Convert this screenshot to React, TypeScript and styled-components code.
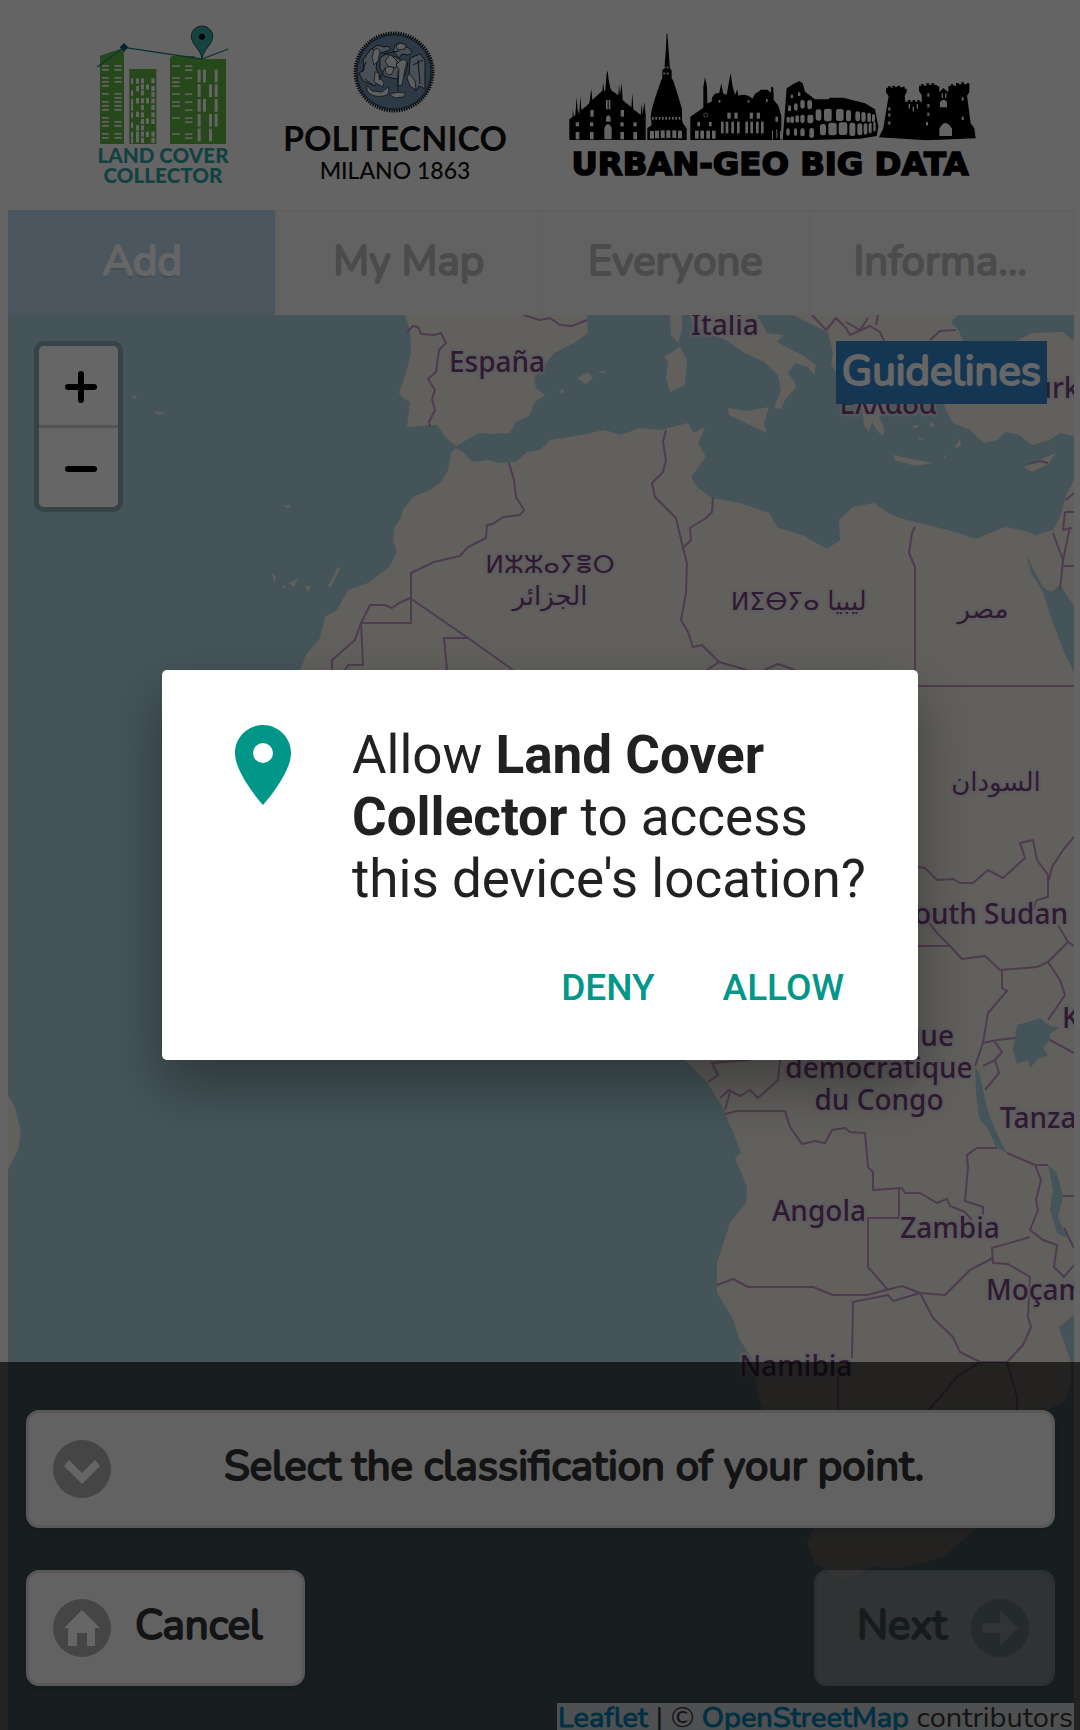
import React from "react";
import styled, { createGlobalStyle, css } from "styled-components";

const GlobalStyle = createGlobalStyle`
  * { box-sizing: border-box; }
  body { margin: 0; background: #f9f9f9; }
  button { font: inherit; margin: 0; cursor: pointer; }
`;

const uiFont = `Nunito, Lato, "Open Sans", sans-serif`;
const mapFont = `"Noto Sans", "DejaVu Sans", sans-serif`;

const thickText = css`
  font-weight: 400;
  -webkit-text-stroke: 2px currentColor;
`;

const Screen = styled.div`
  position: relative;
  height: 100vh;
  overflow: hidden;
  background: #f9f9f9;
  color: #333;
  font-family: ${uiFont};
`;

const Page = styled.div`
  display: flex;
  flex-direction: column;
  height: 100%;
  padding: 0 6px 0 8px;
`;

const Header = styled.header`
  display: flex;
  gap: 40px;
  padding: 15px 72px;
  height: 210px;
  flex: none;
`;

const Logo = styled.svg`
  display: block;
  flex: none;
`;

const Tabs = styled.nav`
  display: grid;
  grid-template-columns: repeat(4, minmax(0, 1fr));
  flex: none;
`;

const Tab = styled.button<{ $active?: boolean }>`
  height: 105px;
  padding: 0 44px 4px;
  border: 2px solid #f1f1f1;
  border-width: 2px 0 0 2px;
  background: #f6f6f6;
  color: #bbb;
  font-size: 42px;
  ${thickText}
  text-align: center;
  overflow: hidden;
  white-space: nowrap;
  text-overflow: ellipsis;
  ${(p) =>
    p.$active &&
    css`
      border-color: #bed7eb;
      background: #bed7eb;
      color: #fff;
      text-shadow: 0 3px 0 #a9c0d3;
    `}
`;

const MapArea = styled.main`
  position: relative;
  flex: 1;
  min-height: 0;
  overflow: hidden;
  background: #aad3df;
`;

const MapSvg = styled.svg`
  display: block;
  width: 100%;
  height: 100%;
`;

const ZoomControl = styled.div`
  position: absolute;
  top: 26px;
  left: 26px;
  display: flex;
  flex-direction: column;
  border: 5px solid rgba(0, 0, 0, 0.2);
  border-radius: 10px;
  background-clip: padding-box;
`;

const ZoomButton = styled.button`
  display: grid;
  place-items: center;
  width: 79px;
  height: 79px;
  padding: 0;
  border: 0;
  background: #fff;
  &:first-child {
    height: 82px;
    border-bottom: 3px solid #ccc;
    border-radius: 5px 5px 0 0;
  }
  &:last-child {
    border-radius: 0 0 5px 5px;
  }
`;

const Guidelines = styled.button`
  position: absolute;
  top: 26px;
  right: 27px;
  height: 63px;
  padding: 0 6px 2px;
  border: 0;
  background: #38c;
  color: #fff;
  font-size: 42px;
  ${thickText}
`;

const Panel = styled.section`
  position: absolute;
  left: 0;
  right: 0;
  bottom: 0;
  display: flex;
  flex-direction: column;
  gap: 42px;
  padding: 48px 25px 44px 26px;
  background: rgba(0, 0, 0, 0.64);
`;

const PanelRow = styled.div`
  display: flex;
  justify-content: space-between;
`;

const PanelButton = styled.button<{ $wide?: boolean }>`
  display: flex;
  align-items: center;
  gap: 24px;
  height: ${(p) => (p.$wide ? 118 : 116)}px;
  padding: 0 39px 0 24px;
  border: 3px solid #ddd;
  border-radius: 13px;
  background: #f6f6f6;
  box-shadow: 0 3px 8px rgba(0, 0, 0, 0.15);
  color: #333;
  font-size: 42px;
  ${thickText}
  &:disabled {
    padding: 0 23px 0 40px;
    color: #333;
    opacity: 0.3;
  }
`;

const ButtonText = styled.span<{ $fill?: boolean }>`
  flex: ${(p) => (p.$fill ? 1 : "none")};
  padding-bottom: 6px;
  text-align: center;
`;

const RoundIcon = styled.svg`
  flex: none;
  width: 58px;
  height: 58px;
`;

const Attribution = styled.footer`
  position: absolute;
  right: 6px;
  bottom: 0;
  height: 27px;
  padding: 0 1px;
  overflow: hidden;
  background: rgba(255, 255, 255, 0.7);
  font-size: 29px;
  line-height: 29px;
  white-space: nowrap;
`;

const MapLink = styled.a`
  color: #0078a8;
  -webkit-text-stroke: 1px currentColor;
  text-decoration: none;
`;

const Scrim = styled.div`
  position: absolute;
  inset: 0;
  display: grid;
  place-items: center;
  background: rgba(0, 0, 0, 0.6);
`;

const Dialog = styled.div`
  width: 70%;
  padding: 47px 42px 30px 53px;
  border-radius: 5px;
  background: #fff;
  box-shadow: 0 26px 56px rgba(0, 0, 0, 0.35);
  font-family: Roboto, sans-serif;
`;

const DialogBody = styled.div`
  display: flex;
  gap: 41px;
`;

const DialogText = styled.p`
  margin: 7px 0 0;
  color: #212121;
  font-size: 53px;
  line-height: 62px;
`;

const DialogActions = styled.div`
  display: flex;
  justify-content: flex-end;
  gap: 26px;
  margin-top: 34px;
  padding-right: 11px;
`;

const DialogButton = styled.button`
  height: 86px;
  padding: 0 21px;
  border: 0;
  background: none;
  color: #009688;
  font-size: 37px;
  font-weight: 500;
`;

const paper = "#f9f9f9";

function bars(points: number[][], w: number, h: number) {
  return points.map(([x, y]) => <rect key={`${x}-${y}`} x={x} y={y} width={w} height={h} />);
}

const leftTower = [153, 165, 189, 201, 213, 237, 249, 261, 273, 285, 309, 321, 333, 357, 369];
const rightRows = [153, 189, 201, 213, 237, 261, 273, 309, 325, 357];

function LandCoverLogo() {
  return (
    <Logo width="160" height="180" viewBox="0 0 480 540" role="img" aria-label="Land Cover Collector">
      <g fill="#62b441">
        <path d="M60 122 132 98V387H60ZM148 162h81v225h-81ZM270 127l6-4h69v9h93v255H270Z" />
      </g>
      <g fill={paper}>
        {bars(leftTower.filter((_, i) => i !== 6).map((y) => [66, y - 3]), 20, 5)}
        {bars(leftTower.filter((_, i) => i !== 4 && i !== 10).map((y) => [103, y - 3]), 22, 5)}
        {bars([[153, 190], [153, 226], [153, 252], [153, 270], [153, 292], [153, 322], [153, 350], [153, 368]], 6, 17)}
        {bars([[168, 190], [168, 213], [168, 249], [168, 290], [168, 331], [168, 350], [168, 366]], 9, 16)}
        {bars([[183, 190], [183, 208], [183, 226], [183, 250], [183, 270], [183, 292], [183, 312], [183, 331], [183, 350], [183, 369]], 9, 15)}
        {bars([[198, 208], [198, 249], [198, 310], [198, 350]], 9, 16)}
        {bars([[214, 190], [214, 213], [214, 231], [214, 250], [214, 270], [214, 292], [214, 312], [214, 350], [214, 369]], 10, 15)}
        {bars(rightRows.filter((y) => y !== 325).map((y) => [277, y - 2]), 22, 5)}
        {bars([153, 165, 189, 237, 261, 285, 309, 321, 357, 369].map((y) => [315, y - 2]), 22, 5)}
        {bars([[353, 164], [369, 164], [404, 164], [353, 208], [387, 208], [404, 208], [353, 252], [369, 252], [404, 252], [353, 297], [387, 297], [404, 297], [353, 341], [387, 341]], 9, 38)}
      </g>
      <path d="M52 156 132 97 365 132 445 102" fill="none" stroke="#1b7c92" strokeWidth="4" />
      <path d="M132 84 145 97 132 110 119 97Z" fill="#0d5f78" />
      <path d="M366 130C362 104 334 88 334 64a32 31 0 0 1 64 0C398 88 370 104 366 130Z" fill="#33a9a4" stroke="#1c5654" strokeWidth="3" />
      <circle cx="366" cy="65" r="9" fill="#000" />
      <g fill="#2fa3a3" fontFamily="Lato, sans-serif" fontWeight="900" fontSize="62" textAnchor="middle">
        <text x="249" y="443">LAND COVER</text>
        <text x="249" y="504">COLLECTOR</text>
      </g>
    </Logo>
  );
}

function PolitecnicoLogo() {
  return (
    <Logo width="240" height="180" viewBox="280 15 240 180" role="img" aria-label="Politecnico Milano 1863">
      <circle cx="394" cy="72" r="39" fill="#7091ad" />
      <circle cx="394" cy="72" r="39" fill="none" stroke="#111" strokeWidth="3" strokeDasharray="1.3 1.2" />
      <circle cx="394" cy="72" r="37" fill="none" stroke="#2c3e4e" strokeWidth="1" />
      <g fill="#b6c6d8" stroke="#26323d" strokeWidth="1">
        <path d="M363 60l8-11 6-1 1 8-2 12 4 8-5 10-12-5-4-8 5-3Z" />
        <path d="M410 58l10-4 5 6v29l-6-3-3 5-7-14Z" />
        <path d="M372 49q5-6 12-2 7-2 6 3l-9 3Z" />
        <path d="M395 45q6-4 10 1l5 3q4 4-2 6l-6-1-3 4-6-7Z" />
        <path d="M380 58l6-4 10 3 6 4 6 2-3 12-9 4-12-3-4-8Z" />
      </g>
      <g fill="#e9eef2" stroke="#26323d" strokeWidth="0.8">
        <path d="M374 50q4-4 6 2l-2 9-4 4-2-8Z" />
        <path d="M388 57q3-4 5 0l4 4-1 7-8-2-3-5Z" />
        <path d="M400 61q5-3 7 1l-2 7-3 16-4 1 1-17-3-4Z" />
        <path d="M385 68q6-3 9 1l-3 6-5-1Z" />
        <path d="M375 72q5 0 4 6l5 4-1 5-9-5Z" />
        <path d="M367 85l5 6 10 1 6-5q3 7-4 9-12 2-17-5Z" />
        <path d="M409 73l6 8 1 9-6-4-3-8Z" />
        <path d="M389 94q8-3 17-1l-3 4-8 1Z" />
        <path d="M396 46l4-3 6 2-1 4-7 1Z" />
      </g>
      <path d="M366 62l-4 10M383 54l16-3M398 71v20M379 80l6-12M418 60l2 24M413 65l10-5M365 79l8 6" fill="none" stroke="#26323d" strokeWidth="1" />
      <g fill="#111" fontFamily="Lato, sans-serif" textAnchor="middle">
        <text x="395" y="151" fontSize="34" fontWeight="700">POLITECNICO</text>
        <text x="395" y="179" fontSize="23" fontWeight="500">MILANO 1863</text>
      </g>
    </Logo>
  );
}

const arches = [
  [684, 256, 9, 18], [702, 250, 11, 22], [721, 240, 13, 26], [742, 240, 14, 28],
  [680, 290, 9, 18], [691, 289, 11, 20], [706, 286, 11, 22], [721, 284, 13, 25], [742, 284, 18, 26],
  [679, 325, 10, 22], [702, 325, 9, 22], [721, 325, 13, 24], [748, 324, 14, 30],
  [767, 268, 17, 34], [792, 266, 23, 38], [828, 267, 23, 36], [858, 270, 15, 34], [886, 274, 14, 30], [904, 276, 13, 30], [922, 278, 11, 28], [936, 282, 9, 24],
  [780, 312, 18, 34], [805, 308, 25, 38], [836, 307, 26, 38], [868, 308, 18, 40], [892, 310, 15, 36], [911, 310, 11, 34], [926, 308, 9, 32], [940, 306, 7, 28],
];

function UrbanGeoLogo() {
  return (
    <Logo width="430" height="170" viewBox="0 -15 1290 510" role="img" aria-label="Urban-Geo Big Data">
      <path d="M28 360V298l10-8V268l4 22 4-5 4-53 3 38 5 12 3-54 3 42 11-8 13-12 6-44 3 34 30-28 2-24 4 27 3-5 4-50 3-8 3 28 5 25 5 7 19 14 2-34 3 34 5-36 3 50 6 5 20 17 3-44 3 50 14 10 8 7 3-35 3 35 5-40 4 40v75Z" />
      <path d="M262 360v-35l13-10-3-25 3-20 10-35 18-53 4-7v-25l6-5 3-35 2-30 2-40h2l3 40 2 30 3 35 5 7v23l5 7 15 48 11 38v32l4 12 10 13v35Z" />
      <path d="M391 360v-70l39-27v-63l5-28 6 28 1 50 13-5 1-12 8-11 14-4 6-28 5 30 11 5 8-45 4-20 6 40 7 25 7-17 3 19q24-8 42 9l8-14 18-13h20l9 10 2-20 6 5 1 35 14 18 9 30v73Z" />
      <path d="M668 360l12-155 20-13 18-9 10 7 7 25 30 23h40l5-5h40l65 17 30 18 10 52-5 28-50 8-150 4Z" />
      <path d="M957 352 970 325 986 228 978 218V203H984V199H992V203H997V197H1005V201H1012V197H1020V202H1028V200H1034V206H1040V216L1034 228 1036 245H1044V240H1051V245H1058V240H1065V245H1072V240H1079V245H1086L1085 225 1077 213V197H1084V192H1091V197H1099V190H1107V194H1115V190H1123V195H1131V199H1138V217L1150 204 1165 217V198H1172V193H1180V197H1188V189H1196V193H1204V187H1212V193H1220V190H1228V216L1221 227 1232 310 1243 325 1247 355 1100 361Z" />
      <g fill={paper}>
        {bars([[47, 336], [90, 336], [181, 336], [220, 336]], 11, 22)}
        {bars([[47, 307], [90, 307], [181, 307], [220, 307]], 10, 12)}
        {bars([[91, 270], [182, 270]], 10, 20)}
        {bars([[138, 240], [146, 240]], 5, 28)}
        <path d="M133 358v-35q11-22 22 0v35ZM138 305v-12q7-14 14 0v12Z" />
        {bars([[270, 333], [285, 332], [302, 331], [319, 331], [337, 331], [354, 332]], 12, 23)}
        {bars([276, 286, 296, 306, 316, 326, 336, 346, 356].map((x) => [x, 291]), 5, 8)}
        {bars([[310, 140], [320, 140], [310, 158], [320, 158]], 6, 5)}
        {bars([[405, 332], [421, 332], [439, 332], [456, 332]], 11, 24)}
        {bars([[412, 306], [447, 306]], 8, 13)}
        {bars([[483, 305], [497, 305], [514, 305], [531, 305], [556, 305], [571, 305], [588, 305], [603, 305]], 8, 35)}
        {bars([[502, 278], [523, 278], [569, 278], [590, 278]], 10, 18)}
        {bars([[636, 332], [649, 328], [660, 332]], 3, 26)}
        <circle cx="437" cy="285" r="6" fill="none" stroke={paper} strokeWidth="2" />
        <path d="M646 290h8v15h-8ZM563 240h5v8h-5ZM618 237h5v9h-5ZM476 240h5v8h-5Z" />
        {arches.map(([x, y, w, h]) => (
          <rect key={`${x}-${y}`} x={x} y={y} width={w} height={h} rx={Math.min(w / 2, 7)} />
        ))}
        <path d="M663 355 668 290h3L666 355ZM692 224h7v10h-7ZM714 217h7v11h-7Z" />
        <path d="M1138 348v-22q18-34 38 0v22ZM1140 262v-16q11-14 21 0v16Z" />
        {bars([[985, 262], [985, 280], [985, 304], [1102, 220], [1102, 252], [1102, 278], [1098, 306], [1205, 232], [1205, 290]], 6, 10)}
        {bars([[1046, 252], [1058, 260], [1070, 252], [1145, 220], [1155, 220]], 4, 14)}
      </g>
      <text x="630" y="465" textAnchor="middle" stroke="#000" strokeWidth="5" fontFamily="DejaVu Sans, sans-serif" fontWeight="700" fontSize="97">
        URBAN-GEO BIG DATA
      </text>
    </Logo>
  );
}

const land = [
  // Iberia and southern France
  "M405 315 410 330 411 353 406 373 399 393 402 397 410 402 407 427 437 425 446 438 456 446 461 443 479 433 491 434 510 433 516 422 529 416 535 402 545 395 536 388 534 378 540 368 547 362 554 353 574 343 588 333 587 315Z",
  "M577 378 588 372 593 378 586 384ZM597 371 604 371 605 374ZM559 392 564 388 563 394Z",
  // Corsica and Sardinia
  "M670 315 682 315 682 330 678 343 671 335ZM664 357 680 347 687 360 685 385 670 392 666 378 668 362Z",
  // Italy and Sicily
  "M690 315 693 324 705 332 726 340 743 352 764 362 778 375 781 390 774 408 781 409 786 398 796 388 795 382 788 373 795 363 808 367 814 375 816 365 802 355 777 342 783 335 767 333 760 320 757 315Z",
  "M728 408 747 411 769 407 764 423 767 433 750 425 729 415Z",
  // Balkans and Greece
  "M793 315 815 326 828 332 833 353 831 365 838 373 850 395 862 408 864 425 869 432 872 422 878 432 883 436 884 428 879 417 888 411 880 400 900 388 930 380 960 370 958 345 963 340 958 330 951 322 958 315Z",
  // Anatolia
  "M940 395 950 380 970 350 1017 341 1032 333 1063 332 1070 338 1074 340V436L1060 433 1050 440 1032 445 1019 435 1005 432 998 440 984 443 970 430 953 423 946 410Z",
  "M893 455 912 459 933 463 915 466 895 460ZM1024 467 1036 461 1056 453 1048 464 1032 472ZM954 448 960 439 961 446Z",
  "M912 426l8-1-5 4ZM930 422l6 3-6 2ZM918 437l7 2-6 1ZM945 455l2 4-3-1Z",
  // Africa and the Near East
  "M456 448 451 453 448 470 441 482 430 490 413 497 403 510 401 518 394 528 393 540 397 552 389 567 368 583 348 590 337 610 325 617 320 638 306 655 300 670 280 700 270 800 330 910 520 930 640 950 670 1040 685 1060 707 1082 723 1108 732 1130 741 1152 735 1158 747 1187 746 1203 730 1223 717 1263 717 1293 732 1317 740 1340 755 1363 757 1390 764 1415 800 1480 814 1528 807 1543 815 1563 838 1578 853 1577 870 1567 900 1568 922 1563 943 1557 974 1530 1010 1480 1048 1409 1064 1402 1071 1385 1071 1362 1063 1340 1059 1327 1074 1315V480L1067 493 1060 517 1053 530 1036 535 1022 530 1005 527 990 533 976 539 955 532 936 527 915 522 900 518 888 513 874 503 853 507 839 520 840 540 827 549 802 535 778 528 769 513 740 503 712 498 697 487 691 477 706 457 698 443 705 427 693 433 688 423 660 430 640 428 621 435 605 430 581 435 550 440 540 450 527 452 516 462 499 463 489 460 473 462 463 452Z",
  // Brazil's eastern cape
  "M8 1096 15 1107 21 1133 18 1150 8 1170Z",
  // Atlantic islands
  "M272 573l4 4-2 6ZM288 583l10-4-4 8ZM305 586l6 0-3 6ZM328 586l6-10 3-8 4-1-7 14-3 6ZM284 505l7 0-3 4ZM131 397l6-2-2 4ZM154 411l12 2-8 2ZM281 587l4-2 0 3Z",
];

const water = [
  "M1026 553 1031 565 1043 587 1051 592 1060 585 1074 606V672L1064 652 1050 615 1043 592 1031 573Z",
  "M1017 1025 1028 1022 1040 1018 1050 1026 1060 1027 1050 1034 1050 1040 1043 1048 1048 1055 1038 1059 1030 1068 1028 1060 1017 1064 1013 1050Z",
  "M975 1067 979 1072 983 1090 988 1112 994 1127 1000 1140 1007 1153 996 1147 989 1130 979 1118 976 1093Z",
  "M1048 1165 1057 1173 1063 1197 1058 1217 1067 1238 1057 1233 1050 1210 1053 1190Z",
];

const borders = [
  "M407 332 413 326 418 327 421 334 434 335 441 333 446 343 439 350 436 372 428 379 435 390 432 399 435 410 429 422 430 427",
  "M523 315 540 320 550 318 560 325 572 326 587 320",
  "M509 463 514 480 516 497 524 510 520 515 503 517 493 524 487 525 486 538 468 547 460 556 434 562 411 573V623H361L355 640 332 660V670",
  "M513 670 468 638 410 598 399 603 392 608 385 605 370 605 361 623 363 665H348L345 670M468 638H444L447 670",
  "M666 430 663 442 666 460 663 472 652 483 655 497 676 518 680 535 683 548 687 563 686 593 681 620 688 632 693 647 702 645 719 662 747 670M719 662 707 670M683 548 691 540 690 528 706 518 712 512 713 498M764 670 778 664 795 670",
  "M915 527 912 533 909 553 915 567V686H1074",
  "M1053 533 1063 560 1060 590M1063 560 1070 527M1063 566H1074M1065 512H1074M1065 512 1063 530 1072 528M1066 500 1074 493M1028 464 1040 461 1048 463",
  "M918 867 925 868 937 880 953 879 960 883 973 883 988 870 1003 878 1025 858 1020 843 1033 840 1037 860 1048 875V897L1037 900 1033 910M1074 837 1063 850 1052 867 1049 880",
  "M918 946H950L962 959 985 956 1000 970 1037 967 1048 962 1068 942 1058 925M1068 942 1074 946M950 946 937 933 927 920M1048 962 1060 980 1065 995 1048 1020",
  "M1002 970V988L1007 991 988 1013 983 1043 997 1040 1015 1038M983 1043 975 1066M995 1042 1002 1052 995 1060 999 1073 985 1090M1050 1040 1074 1053M983 1066 995 1060",
  "M708 1082 718 1075 712 1063 750 1060M720 1098 729 1090 740 1096 750 1090 758 1098 778 1080 780 1060M725 1110 730 1092",
  "M725 1114 737 1111H785L790 1127 802 1144 815 1141 825 1143 832 1130 845 1128 850 1132 865 1133 868 1167 873 1172V1190L902 1188 905 1193 920 1193 937 1203 947 1199 950 1206 965 1212 972 1220",
  "M899 1188V1218H868V1267L888 1290M983 1215V1207L965 1201 968 1167 967 1155 977 1148H997M1007 1153 1035 1165 1041 1180 1036 1200 1038 1210 1030 1230 1043 1240 1057 1245 1054 1267 1064 1277 1074 1265M1035 1165H1048M1063 1196H1074M1064 1228 1074 1248",
  "M1030 1237 992 1248 993 1263 1008 1264 1030 1277 1028 1317 1031 1327 1023 1345 1007 1362 1017 1397V1412",
  "M717 1285 733 1279 748 1287H813L833 1295H867L902 1286 920 1293 945 1295 970 1270 993 1258M852 1358 853 1302 888 1295 893 1301 920 1293 933 1318 953 1337 960 1352 980 1362H1007M980 1362 957 1377 940 1397 927 1412M838 1377V1412",
  "M812 315 826 330 836 318 846 328 850 335 870 326 880 332 884 341M846 322 860 330 868 318M878 315 876 325M930 340 940 331 956 330",
];

const labels: { x: number; y: number; text: string; anchor?: "start" | "middle" | "end"; size?: number }[] = [
  { x: 497, y: 372, text: "España", anchor: "middle" },
  { x: 725, y: 335, text: "Italia", anchor: "middle" },
  { x: 888, y: 414, text: "Ελλάδα", anchor: "middle" },
  { x: 1020, y: 398, text: "Türkiye" },
  { x: 550, y: 573, text: "ⵍⵣⵣⴰⵢⴻⵔ", anchor: "middle", size: 25 },
  { x: 550, y: 605, text: "الجزائر", anchor: "middle", size: 26 },
  { x: 775, y: 610, text: "ⵍⵉⴱⵢⴰ", anchor: "middle", size: 25 },
  { x: 847, y: 610, text: "ليبيا", anchor: "middle", size: 26 },
  { x: 983, y: 618, text: "مصر", anchor: "middle", size: 26 },
  { x: 996, y: 791, text: "السودان", anchor: "middle", size: 26 },
  { x: 1068, y: 924, text: "South Sudan", anchor: "end" },
  { x: 1062, y: 1028, text: "Kenya" },
  { x: 954, y: 1046, text: "République", anchor: "end" },
  { x: 879, y: 1078, text: "démocratique", anchor: "middle" },
  { x: 879, y: 1110, text: "du Congo", anchor: "middle" },
  { x: 1000, y: 1128, text: "Tanzania" },
  { x: 819, y: 1221, text: "Angola", anchor: "middle" },
  { x: 950, y: 1238, text: "Zambia", anchor: "middle" },
  { x: 986, y: 1300, text: "Moçambique" },
  { x: 796, y: 1376, text: "Namibia", anchor: "middle" },
];

function WorldMap() {
  return (
    <MapSvg viewBox="8 315 1066 1415" preserveAspectRatio="xMidYMid slice" role="img" aria-label="Map of Africa and southern Europe">
      <g fill="#f2efe9">{land.map((d) => <path key={d} d={d} />)}</g>
      <g fill="#aad3df">{water.map((d) => <path key={d} d={d} />)}</g>
      <g fill="none" stroke="#c293c6" strokeWidth="2" strokeLinejoin="round">
        {borders.map((d) => <path key={d} d={d} />)}
      </g>
      <g fill="#75447c" stroke="#e9e0ec" strokeOpacity="0.6" strokeWidth="5" strokeLinejoin="round" paintOrder="stroke" fontFamily={mapFont} fontWeight="500">
        {labels.map((l) => (
          <text key={l.text} x={l.x} y={l.y} textAnchor={l.anchor ?? "start"} fontSize={l.size ?? 28}>
            {l.text}
          </text>
        ))}
      </g>
    </MapSvg>
  );
}

function Glyph({ d }: { d: string }) {
  return (
    <RoundIcon viewBox="0 0 58 58" aria-hidden="true">
      <circle cx="29" cy="29" r="29" fill="rgba(0,0,0,0.3)" />
      <path d={d} fill="#fff" />
    </RoundIcon>
  );
}

export default function App() {
  return (
    <Screen>
      <GlobalStyle />
      <Page>
        <Header>
          <LandCoverLogo />
          <PolitecnicoLogo />
          <UrbanGeoLogo />
        </Header>
        <Tabs aria-label="Sections">
          <Tab type="button" $active aria-current="page">Add</Tab>
          <Tab type="button">My Map</Tab>
          <Tab type="button">Everyone</Tab>
          <Tab type="button">Information</Tab>
        </Tabs>
        <MapArea>
          <WorldMap />
          <ZoomControl>
            <ZoomButton type="button" aria-label="Zoom in">
              <svg width="38" height="38" viewBox="0 0 38 38" aria-hidden="true">
                <path d="M8 20H34M21 7V33" stroke="#000" strokeWidth="6" strokeLinecap="round" />
              </svg>
            </ZoomButton>
            <ZoomButton type="button" aria-label="Zoom out">
              <svg width="38" height="38" viewBox="0 0 38 38" aria-hidden="true">
                <path d="M8 20H34" stroke="#000" strokeWidth="6" strokeLinecap="round" />
              </svg>
            </ZoomButton>
          </ZoomControl>
          <Guidelines type="button">Guidelines</Guidelines>
        </MapArea>
      </Page>

      <Panel aria-label="New point">
        <PanelButton type="button" $wide>
          <Glyph d="M16 20 29 33 42 20 47 26 29 44 11 26Z" />
          <ButtonText $fill>Select the classification of your point.</ButtonText>
        </PanelButton>
        <PanelRow>
          <PanelButton type="button">
            <Glyph d="M29 11 47 29H42V47H34V34H24V47H15V29H11Z" />
            <ButtonText>Cancel</ButtonText>
          </PanelButton>
          <PanelButton type="button" disabled>
            <ButtonText>Next</ButtonText>
            <Glyph d="M29 11 47 29 29 47V34H11V24H29Z" />
          </PanelButton>
        </PanelRow>
      </Panel>

      <Attribution>
        <MapLink href="#leaflet">Leaflet</MapLink> | © <MapLink href="#osm">OpenStreetMap</MapLink> contributors
      </Attribution>

      <Scrim>
        <Dialog role="dialog" aria-modal="true" aria-labelledby="permission-text">
          <DialogBody>
            <Logo width="96" height="96" viewBox="0 0 24 24" aria-hidden="true">
              <path fill="#009688" d="M12 2C8.13 2 5 5.13 5 9c0 5.25 7 13 7 13s7-7.75 7-13c0-3.87-3.13-7-7-7zm0 9.500a2.500 2.500 0 0 1 0-5 2.500 2.500 0 0 1 0 5z" />
            </Logo>
            <DialogText id="permission-text">
              Allow <b>Land Cover Collector</b> to access this device's location?
            </DialogText>
          </DialogBody>
          <DialogActions>
            <DialogButton type="button">DENY</DialogButton>
            <DialogButton type="button">ALLOW</DialogButton>
          </DialogActions>
        </Dialog>
      </Scrim>
    </Screen>
  );
}
